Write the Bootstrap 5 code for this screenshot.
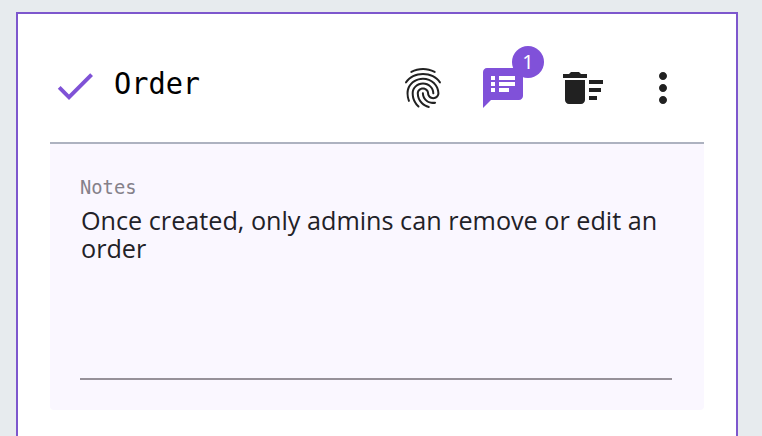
<!DOCTYPE html>
<html lang="en">
<head>
<meta charset="utf-8">
<meta name="viewport" content="width=device-width, initial-scale=1">
<title>Order</title>
<link href="https://cdn.jsdelivr.net/npm/bootstrap@5.3.0/dist/css/bootstrap.min.css" rel="stylesheet">
<style>
  body { background: #e7ebee; font-family: "Noto Sans", "Open Sans", sans-serif; padding: 12px 24px 0 16px; }
  .order-panel { height: 424px; border: 2px solid #7d57cd; border-bottom: 0; padding: 0 32px; }
  .order-head { height: 130px; border-bottom: 2px solid #adb2c0; }
  .order-head svg { display: block; width: 48px; height: 48px; fill: currentColor; }
  .head-check { margin: 48px 0 0 1px; color: #7f52d6; }
  .order-title { font: 28.6px/40px "DejaVu Sans Mono", monospace; color: #000; margin: 49px 0 0 15px; transform: scaleY(1.07); }
  .head-actions { gap: 32px; margin: 50px 17px 0 0; color: #212121; }
  .head-actions .btn { color: inherit; --bs-btn-border-width: 0; }
  .head-actions .notes-btn { color: #8051d9; }
  .notes-count { top: -18px; left: 33px; width: 32px; height: 32px; background: #8051d9; font-size: 20px; line-height: 31px; }
  .notes-box { background: #faf7ff; height: 266px; padding: 31px 32px 0 30px; border-radius: 0 0 4px 4px; }
  .notes-label { font: 18.8px/26px "DejaVu Sans Mono", monospace; color: #85818a; transform: scaleY(1.06); }
  .notes-text { height: 179px; padding: 5px 0 0 1px; font: 25.2px/28px "Open Sans", sans-serif; color: #222127; border-bottom: 2px solid #969199; }
</style>
<script src="https://cdn.jsdelivr.net/npm/bootstrap@5.3.0/dist/js/bootstrap.bundle.min.js"></script>
</head>
<body>
<main class="order-panel bg-white">
  <header class="order-head d-flex align-items-start">
    <svg class="head-check" viewBox="0 0 24 24" aria-hidden="true"><path d="M9 16.2L4.8 12l-1.4 1.4L9 19 21 7l-1.4-1.4z"/></svg>
    <h1 class="order-title">Order</h1>
    <div class="head-actions d-flex ms-auto">
      <button class="btn p-0" type="button" aria-label="Identity">
        <svg viewBox="0 0 24 24"><path d="M17.81 4.47c-.08 0-.16-.02-.23-.06C15.66 3.42 14 3 12.01 3c-1.98 0-3.86.47-5.57 1.41-.24.13-.54.04-.68-.2-.13-.24-.04-.55.2-.68C7.82 2.52 9.86 2 12.01 2c2.13 0 3.99.47 6.03 1.52.25.13.34.43.21.67-.09.18-.26.28-.44.28zM3.5 9.72c-.1 0-.2-.03-.29-.09-.23-.16-.28-.47-.12-.7.99-1.4 2.25-2.5 3.75-3.27C9.98 4.04 14 4.03 17.15 5.65c1.5.77 2.76 1.86 3.75 3.25.16.22.11.54-.12.7-.23.16-.54.11-.7-.12-.9-1.26-2.04-2.25-3.39-2.94-2.87-1.47-6.54-1.47-9.4.01-1.36.7-2.5 1.7-3.4 2.96-.08.14-.23.21-.39.21zm6.25 12.07c-.13 0-.26-.05-.35-.15-.87-.87-1.34-1.43-2.01-2.64-.69-1.23-1.05-2.73-1.05-4.34 0-2.97 2.54-5.39 5.66-5.39s5.66 2.42 5.66 5.39c0 .28-.22.5-.5.5s-.5-.22-.5-.5c0-2.42-2.09-4.39-4.66-4.39-2.57 0-4.66 1.97-4.66 4.39 0 1.44.32 2.77.93 3.85.64 1.15 1.08 1.64 1.85 2.42.19.2.19.51 0 .71-.11.1-.24.15-.37.15zm7.17-1.85c-1.19 0-2.24-.3-3.1-.89-1.49-1.01-2.38-2.65-2.38-4.39 0-.28.22-.5.5-.5s.5.22.5.5c0 1.41.72 2.74 1.94 3.56.71.48 1.54.71 2.54.71.24 0 .64-.03 1.04-.1.27-.05.53.13.58.41.05.27-.13.53-.41.58-.57.11-1.07.12-1.21.12zM14.91 22c-.04 0-.09-.01-.13-.02-1.59-.44-2.63-1.03-3.72-2.1-1.4-1.39-2.17-3.24-2.17-5.22 0-1.62 1.38-2.94 3.08-2.94 1.7 0 3.08 1.32 3.08 2.94 0 1.07.93 1.94 2.08 1.94s2.08-.87 2.08-1.94c0-3.77-3.25-6.83-7.25-6.83-2.84 0-5.44 1.58-6.61 4.03-.39.81-.59 1.76-.59 2.8 0 .78.07 2.01.67 3.61.1.26-.03.55-.29.64-.26.1-.55-.04-.64-.29-.49-1.31-.73-2.61-.73-3.96 0-1.2.23-2.29.68-3.24 1.33-2.79 4.28-4.6 7.51-4.6 4.55 0 8.25 3.51 8.25 7.83 0 1.62-1.38 2.94-3.08 2.94s-3.08-1.32-3.08-2.94c0-1.07-.93-1.94-2.08-1.94s-2.08.87-2.08 1.94c0 1.71.66 3.31 1.87 4.51.95.94 1.86 1.46 3.27 1.85.27.07.42.35.35.61-.05.23-.26.38-.47.38z"/></svg>
      </button>
      <button class="btn p-0 notes-btn position-relative" type="button" aria-label="Notes">
        <svg viewBox="0 0 24 24"><path d="M20 2H4c-1.100 0-1.990.9-1.990 2L2 22l4-4h14c1.100 0 2-.9 2-2V4c0-1.100-.9-2-2-2zM8 14H6v-2h2v2zm0-3H6V9h2v2zm0-3H6V6h2v2zm7 6h-5v-2h5v2zm3-3h-8V9h8v2zm0-3h-8V6h8v2z"/></svg>
        <span class="notes-count position-absolute rounded-circle text-white text-center">1</span>
      </button>
      <button class="btn p-0" type="button" aria-label="Clear">
        <svg viewBox="0 0 24 24"><path d="M15 16h4v2h-4zm0-8h7v2h-7zm0 4h6v2h-6zM3 18c0 1.100.9 2 2 2h6c1.100 0 2-.9 2-2V8H3v10zM14 5h-3l-1-1H6L5 5H2v2h12z"/></svg>
      </button>
      <button class="btn p-0" type="button" aria-label="More">
        <svg viewBox="0 0 24 24"><path d="M12 8c1.100 0 2-.9 2-2s-.9-2-2-2-2 .9-2 2 .9 2 2 2zm0 2c-1.100 0-2 .9-2 2s.9 2 2 2 2-.9 2-2-.9-2-2-2zm0 6c-1.100 0-2 .9-2 2s.9 2 2 2 2-.9 2-2-.9-2-2-2z"/></svg>
      </button>
    </div>
  </header>
  <section class="notes-box">
    <div class="notes-label">Notes</div>
    <div class="notes-text">Once created, only admins can remove or edit an order</div>
  </section>
</main>
</body>
</html>
